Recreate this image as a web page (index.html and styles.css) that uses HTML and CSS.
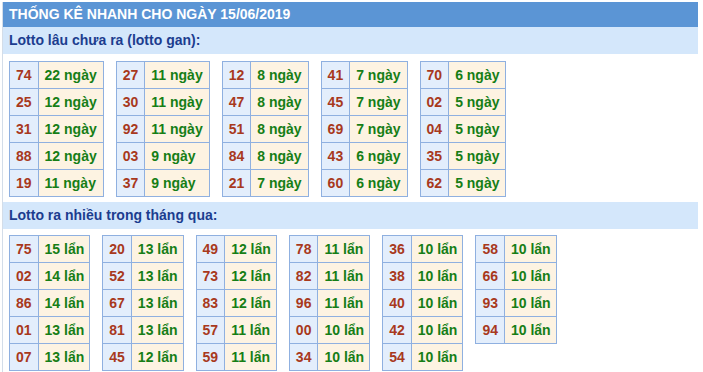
FILE: index.html
```html
<!DOCTYPE html>
<html lang="vi">
<head>
<meta charset="utf-8">
<link rel="stylesheet" href="styles.css">
</head>
<body>
<div class="box">
  <div class="title">THỐNG KÊ NHANH CHO NGÀY 15/06/2019</div>
  <div class="sub">Lotto lâu chưa ra (lotto gan):</div>
  <div class="tables first">
    <table><tr><td class="n">74</td><td class="v">22 ngày</td></tr><tr><td class="n">25</td><td class="v">12 ngày</td></tr><tr><td class="n">31</td><td class="v">12 ngày</td></tr><tr><td class="n">88</td><td class="v">12 ngày</td></tr><tr><td class="n">19</td><td class="v">11 ngày</td></tr></table>
    <table><tr><td class="n">27</td><td class="v">11 ngày</td></tr><tr><td class="n">30</td><td class="v">11 ngày</td></tr><tr><td class="n">92</td><td class="v">11 ngày</td></tr><tr><td class="n">03</td><td class="v">9 ngày</td></tr><tr><td class="n">37</td><td class="v">9 ngày</td></tr></table>
    <table><tr><td class="n">12</td><td class="v">8 ngày</td></tr><tr><td class="n">47</td><td class="v">8 ngày</td></tr><tr><td class="n">51</td><td class="v">8 ngày</td></tr><tr><td class="n">84</td><td class="v">8 ngày</td></tr><tr><td class="n">21</td><td class="v">7 ngày</td></tr></table>
    <table><tr><td class="n">41</td><td class="v">7 ngày</td></tr><tr><td class="n">45</td><td class="v">7 ngày</td></tr><tr><td class="n">69</td><td class="v">7 ngày</td></tr><tr><td class="n">43</td><td class="v">6 ngày</td></tr><tr><td class="n">60</td><td class="v">6 ngày</td></tr></table>
    <table><tr><td class="n">70</td><td class="v">6 ngày</td></tr><tr><td class="n">02</td><td class="v">5 ngày</td></tr><tr><td class="n">04</td><td class="v">5 ngày</td></tr><tr><td class="n">35</td><td class="v">5 ngày</td></tr><tr><td class="n">62</td><td class="v">5 ngày</td></tr></table>
  </div>
  <div class="sub">Lotto ra nhiều trong tháng qua:</div>
  <div class="tables second">
    <table><tr><td class="n">75</td><td class="v">15 lẩn</td></tr><tr><td class="n">02</td><td class="v">14 lẩn</td></tr><tr><td class="n">86</td><td class="v">14 lẩn</td></tr><tr><td class="n">01</td><td class="v">13 lẩn</td></tr><tr><td class="n">07</td><td class="v">13 lẩn</td></tr></table>
    <table><tr><td class="n">20</td><td class="v">13 lẩn</td></tr><tr><td class="n">52</td><td class="v">13 lẩn</td></tr><tr><td class="n">67</td><td class="v">13 lẩn</td></tr><tr><td class="n">81</td><td class="v">13 lẩn</td></tr><tr><td class="n">45</td><td class="v">12 lẩn</td></tr></table>
    <table><tr><td class="n">49</td><td class="v">12 lẩn</td></tr><tr><td class="n">73</td><td class="v">12 lẩn</td></tr><tr><td class="n">83</td><td class="v">12 lẩn</td></tr><tr><td class="n">57</td><td class="v">11 lẩn</td></tr><tr><td class="n">59</td><td class="v">11 lẩn</td></tr></table>
    <table><tr><td class="n">78</td><td class="v">11 lẩn</td></tr><tr><td class="n">82</td><td class="v">11 lẩn</td></tr><tr><td class="n">96</td><td class="v">11 lẩn</td></tr><tr><td class="n">00</td><td class="v">10 lẩn</td></tr><tr><td class="n">34</td><td class="v">10 lẩn</td></tr></table>
    <table><tr><td class="n">36</td><td class="v">10 lẩn</td></tr><tr><td class="n">38</td><td class="v">10 lẩn</td></tr><tr><td class="n">40</td><td class="v">10 lẩn</td></tr><tr><td class="n">42</td><td class="v">10 lẩn</td></tr><tr><td class="n">54</td><td class="v">10 lẩn</td></tr></table>
    <table><tr><td class="n">58</td><td class="v">10 lẩn</td></tr><tr><td class="n">66</td><td class="v">10 lẩn</td></tr><tr><td class="n">93</td><td class="v">10 lẩn</td></tr><tr><td class="n">94</td><td class="v">10 lẩn</td></tr></table>
  </div>
</div>
</body>
</html>
```

FILE: styles.css
```css
html, body {
  margin: 0;
  padding: 0;
  background: #ffffff;
}
body {
  font-family: "Liberation Sans", Arial, sans-serif;
  font-size: 14px;
  font-weight: bold;
}
.box {
  margin: 2px 0 0 2px;
  width: 695px;
  border-left: 1px solid #d3dde9;
  height: 380px;
}
.title {
  height: 25px;
  line-height: 25px;
  background: #5b95d5;
  color: #ffffff;
  padding-left: 6px;
}
.sub {
  height: 27px;
  line-height: 27px;
  background: #d4e7fb;
  color: #1c3d8f;
  padding-left: 6px;
}
.tables {
  display: flex;
  align-items: flex-start;
  gap: 12px;
  padding-left: 6px;
}
.tables.first {
  margin: 7px 0 5px;
}
.tables.second {
  margin-top: 6px;
}
table {
  border-collapse: collapse;
}
td {
  border: 1px solid #8fb0e0;
  height: 26px;
  line-height: 26px;
  white-space: nowrap;
}
td.n {
  padding: 0 6px;
  background: #e3eefc;
  color: #a8391d;
}
td.v {
  padding: 0 5px 0 6px;
  background: #fdf3e2;
  color: #167e16;
}
.first td.v {
  padding-right: 6px;
}
```
